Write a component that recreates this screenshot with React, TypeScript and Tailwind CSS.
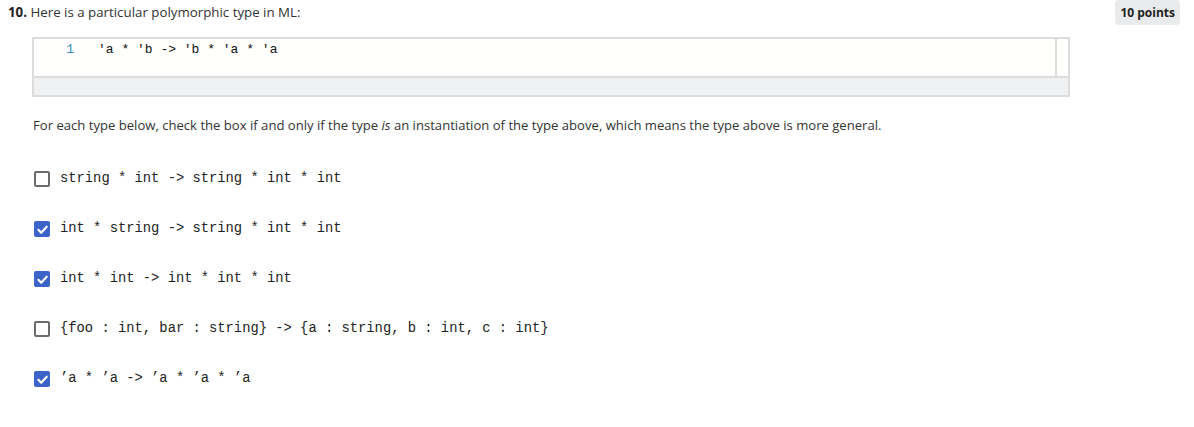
import React from "react";

const options: { text: string; checked: boolean }[] = [
  { text: "string * int -> string * int * int", checked: false },
  { text: "int * string -> string * int * int", checked: true },
  { text: "int * int -> int * int * int", checked: true },
  { text: "{foo : int, bar : string} -> {a : string, b : int, c : int}", checked: false },
  { text: "\u2019a * \u2019a -> \u2019a * \u2019a * \u2019a", checked: true },
];

function Box({ checked }: { checked: boolean }) {
  if (checked) {
    return (
      <span className="flex h-[16px] w-[16px] shrink-0 items-center justify-center rounded-[2px] bg-[#3c63c9]">
        <svg width="13" height="13" viewBox="0 0 12 12" fill="none">
          <path d="M2.2 6.3 L4.8 8.9 L9.9 3.4" stroke="white" strokeWidth="2" strokeLinecap="round" strokeLinejoin="round" />
        </svg>
      </span>
    );
  }
  return <span className="block h-[16px] w-[16px] shrink-0 rounded-[2px] border-2 border-[#6b6b6b] bg-white" />;
}

export default function App() {
  return (
    <div className="relative h-[427px] w-[1194px] bg-white text-[#333] [font-family:'Open_Sans',sans-serif]">
      <div className="absolute right-[14px] top-0 flex h-[25px] items-center rounded-[4px] bg-[#e9eaec] px-[5px] text-[12px] font-bold text-[#222]">
        10 points
      </div>
      <div className="px-[8px] pt-[2px]">
        <div className="text-[13.3px] leading-[20px]">
          <span className="font-bold text-[#222]">10.</span> Here is a particular polymorphic type in ML:
        </div>
        <div className="ml-[24px] mt-[15px] w-[1038px] border-2 border-[#dcdcdc]">
          <div className="flex h-[37px] bg-[#fffffd]">
            <div className="flex flex-1 pt-[3px] [font-family:'Liberation_Mono',monospace] text-[13px] leading-[16px]">
              <span className="w-[40px] text-right text-[#3a8bb5]">1</span>
              <span className="ml-[24px] text-[#111] whitespace-pre">'a * 'b -&gt; 'b * 'a * 'a</span>
            </div>
            <div className="w-[13px] border-l-2 border-[#dcdcdc]" />
          </div>
          <div className="h-[19px] border-t-2 border-[#dcdcdc] bg-[#f0f1f3]" />
        </div>
        <p className="ml-[25px] mt-[18px] text-[13.1px] leading-[20px] text-[#333]">
          For each type below, check the box if and only if the type <em>is</em> an instantiation of the type above, which means the type above is more general.
        </p>
        <div className="ml-[26px] mt-[34px] flex flex-col gap-[30px]">
          {options.map((o, i) => (
            <div key={i} className="flex h-[20px] items-center gap-[10px]">
              <Box checked={o.checked} />
              <span className="whitespace-pre text-[13.8px] text-[#222] [font-family:'Liberation_Mono',monospace]">{o.text}</span>
            </div>
          ))}
        </div>
      </div>
    </div>
  );
}
